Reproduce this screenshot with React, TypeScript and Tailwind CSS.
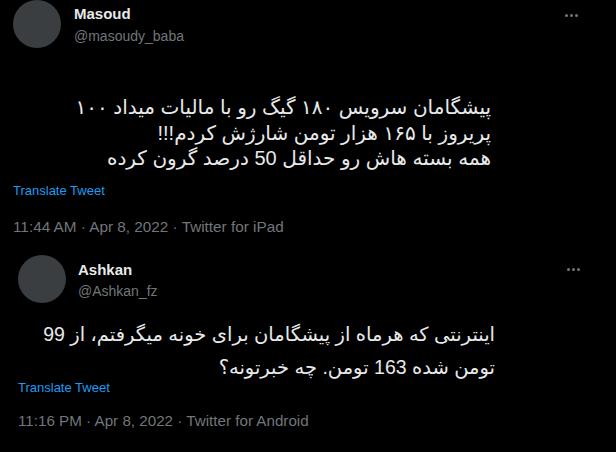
const Dots = () => (
  <div className="flex gap-[2px]">
    <span className="h-[3px] w-[3px] rounded-full bg-[#71767b]" />
    <span className="h-[3px] w-[3px] rounded-full bg-[#71767b]" />
    <span className="h-[3px] w-[3px] rounded-full bg-[#71767b]" />
  </div>
)

const sans = "font-['Liberation_Sans','DejaVu_Sans',sans-serif]"

export default function App() {
  return (
    <div className={`h-[452px] w-[616px] overflow-hidden bg-black text-[#e7e9ea] ${sans}`}>
      {/* first tweet */}
      <div className="pl-[13px]">
        <div className="flex items-start">
          <div className="h-[48px] w-[48px] shrink-0 rounded-full bg-[#3b3e41]" />
          <div className="ml-[13px] mt-[5px] flex flex-col">
            <span className="text-[15px] font-bold leading-[18px]">Masoud</span>
            <span className="mt-[4px] text-[14px] leading-[18px] text-[#71767b]">@masoudy_baba</span>
          </div>
          <div className="ml-auto mr-[38px] mt-[14px]">
            <Dots />
          </div>
        </div>
        <div dir="rtl" className="mt-[47px] w-[478px] whitespace-nowrap text-right text-[20px] leading-[25.5px]">
          <div>پیشگامان سرویس ۱۸۰ گیگ رو با مالیات میداد ۱۰۰</div>
          <div>پریروز با ۱۶۵ هزار تومن شارژش کردم!!!</div>
          <div>همه بسته هاش رو حداقل 50 درصد گرون کرده</div>
        </div>
        <div className="mt-[11px] text-[13px] leading-[16px] text-[#1d9bf0]">Translate Tweet</div>
        <div className="mt-[19px] text-[15.3px] leading-[18px] text-[#71767b]">11:44 AM · Apr 8, 2022 · Twitter for iPad</div>
      </div>

      {/* second tweet */}
      <div className="mt-[19px] pl-[18px]">
        <div className="flex items-start">
          <div className="h-[48px] w-[48px] shrink-0 rounded-full bg-[#3b3e41]" />
          <div className="ml-[12px] mt-[6px] flex flex-col">
            <span className="text-[15px] font-bold leading-[18px]">Ashkan</span>
            <span className="mt-[3px] text-[14px] leading-[18px] text-[#71767b]">@Ashkan_fz</span>
          </div>
          <div className="ml-auto mr-[36px] mt-[13px]">
            <Dots />
          </div>
        </div>
        <div dir="rtl" className="mt-[15px] w-[477px] whitespace-nowrap text-right text-[19.5px] leading-[33px]">
          <div>اینترنتی که هرماه از پیشگامان برای خونه میگرفتم، از 99</div>
          <div>تومن شده 163 تومن. چه خبرتونه؟</div>
        </div>
        <div className="-mt-[4px] text-[13px] leading-[16px] text-[#1d9bf0]">Translate Tweet</div>
        <div className="mt-[16px] text-[15.2px] leading-[18px] text-[#71767b]">11:16 PM · Apr 8, 2022 · Twitter for Android</div>
      </div>
    </div>
  )
}
